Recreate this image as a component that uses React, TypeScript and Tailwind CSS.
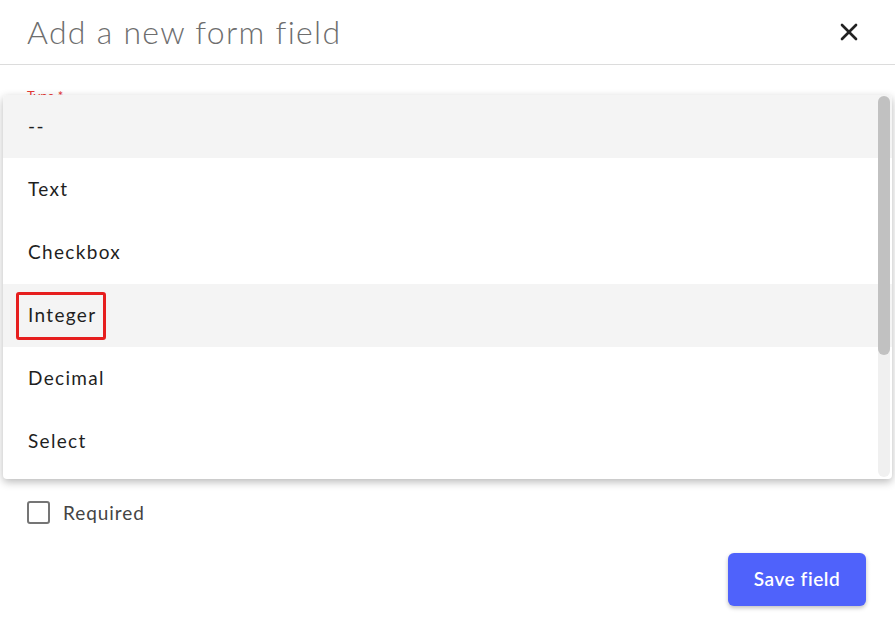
import { X } from 'lucide-react'

const options = ['--', 'Text', 'Checkbox', 'Integer', 'Decimal', 'Select']

function Dropdown() {
  return (
    <div className="absolute left-[3px] top-[95px] h-[384px] w-[889px] overflow-hidden rounded-[4px] bg-white shadow-[0_3px_8px_rgba(0,0,0,0.28)]">
      <ul>
        {options.map((opt) => (
          <li
            key={opt}
            className={`flex h-[63px] items-center px-[25px] text-[19px] tracking-[0.07em] text-[#1f1f1f] ${
              opt === '--' || opt === 'Integer' ? 'bg-[#f4f4f4]' : ''
            }`}
          >
            {opt === 'Integer' ? (
              <span className="relative">
                {opt}
                <span
                  className="absolute -bottom-[10px] -left-[12px] -right-[10px] -top-[9px] rounded-[3px] border-[3px] border-[#e61e1e]"
                  aria-hidden
                />
              </span>
            ) : (
              opt
            )}
          </li>
        ))}
      </ul>
      {/* scrollbar */}
      <div className="absolute bottom-[2px] right-[2px] top-[1px] w-[12px] rounded-full bg-[#f0f0f0]">
        <div className="h-[259px] w-full rounded-full bg-[#c1c1c1]" />
      </div>
    </div>
  )
}

export default function App() {
  return (
    <div className="relative h-[622px] w-[895px] overflow-hidden bg-white font-['Lato',sans-serif]">
      <header className="flex h-[65px] items-center justify-between border-b border-[#dcdcdc] pl-[27px] pr-[32px]">
        <h2 className="text-[32px] font-light tracking-[0.04em] text-[#6e6e6e]">Add a new form field</h2>
        <X size={28} strokeWidth={2.3} className="text-[#222]" />
      </header>

      <div className="px-[27px] pt-[22px]">
        <label className="block text-[13px] text-[#e53935]">Type *</label>
        <div className="h-[392px]" />

        <label className="flex items-center gap-[13px] text-[19px] tracking-[0.05em] text-[#444]">
          <span className="h-[23px] w-[23px] rounded-[3px] border-2 border-[#757575]" />
          Required
        </label>
      </div>

      <div className="flex justify-end pr-[29px] pt-[26px]">
        <button className="h-[53px] w-[138px] rounded-[6px] bg-[#4f62fb] text-[19px] font-semibold tracking-[0.03em] text-white shadow-[0_2px_4px_rgba(0,0,0,0.25)]">
          Save field
        </button>
      </div>

      <Dropdown />
    </div>
  )
}
